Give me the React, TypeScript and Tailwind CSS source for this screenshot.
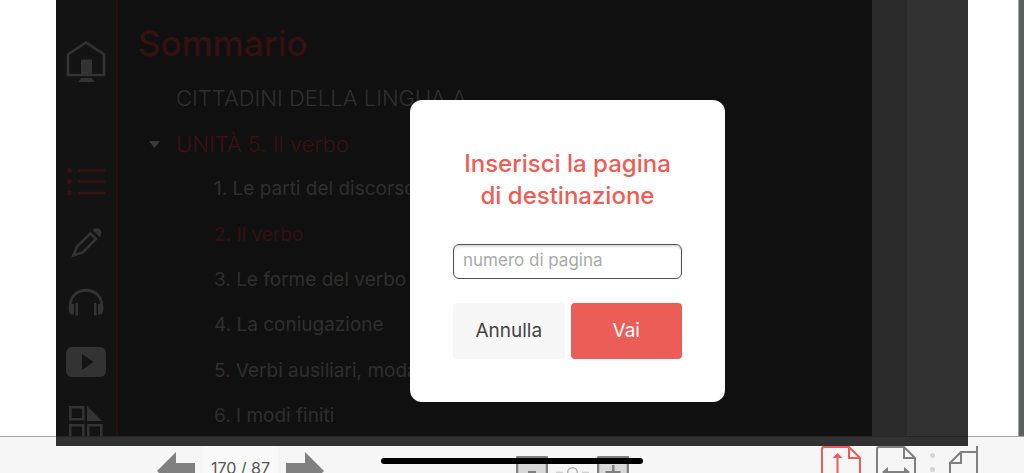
import { useState } from 'react'
import type { ReactNode } from 'react'

const chapters = [
  { title: '1. Le parti del discorso' },
  { title: '2. Il verbo', active: true },
  { title: '3. Le forme del verbo' },
  { title: '4. La coniugazione' },
  { title: '5. Verbi ausiliari, modali' },
  { title: '6. I modi finiti' },
]

function IconButton({ label, className, children }: { label: string; className: string; children: ReactNode }) {
  return (
    <button type="button" aria-label={label} className={`block shrink-0 ${className}`}>
      {children}
    </button>
  )
}

function Sidebar() {
  return (
    <nav className="flex w-[62px] shrink-0 flex-col items-center border-r-2 border-[#2a0f0f] bg-[#131313] pt-10 text-[#333333]">
      <IconButton label="Home" className="mb-[84px]">
        <svg width="40" height="43" viewBox="0 0 40 43" fill="none">
          <path d="M2 14.5 20 2.5l18 12V35H2Z" stroke="currentColor" strokeWidth="2.6" />
          <path d="M15 19.500h11v15H15zM15.500 38h10l3 4h-16Z" fill="currentColor" />
        </svg>
      </IconButton>
      <IconButton label="Sommario" className="mb-[30px] text-[#351313]">
        <svg width="40" height="30" viewBox="0 0 40 30" fill="currentColor">
          <circle cx="3.500" cy="3.500" r="2.600" />
          <circle cx="3.500" cy="14.500" r="2.600" />
          <circle cx="3.500" cy="26" r="2.600" />
          <path d="M12 2.200h27v2.600H12zM12 13.200h27v2.600H12zM12 24.700h27v2.600H12z" />
        </svg>
      </IconButton>
      <IconButton label="Note" className="mb-[30px]">
        <svg width="32" height="31" viewBox="0 0 32 31" fill="none">
          <path d="M20.500 6.500 7 19.500 3.500 28.200 12.500 25.500 26 12Z" stroke="currentColor" strokeWidth="2.600" />
          <path d="M22.500 3C25-.500 33 1 31 7.500L30 10.500Z" fill="currentColor" />
        </svg>
      </IconButton>
      <IconButton label="Audio" className="mb-[30px]">
        <svg width="36" height="29" viewBox="0 0 36 29" fill="none">
          <path d="M3 24C-4 -5 40 -5 33 24" stroke="currentColor" strokeWidth="2.800" />
          <path d="M1.500 16C-.5 21 1 26 3 26.500H6V16ZM34.500 16C36.500 21 35 26 33 26.500H30V16ZM7.500 15h2.500v12.500H7.500zM26 15h2.500v12.500H26z" fill="currentColor" />
        </svg>
      </IconButton>
      <IconButton label="Video" className="mb-7">
        <svg width="40" height="30" viewBox="0 0 40 30">
          <rect width="40" height="30" rx="6" fill="currentColor" />
          <path d="m16 7 11.500 8L16 23Z" fill="#131313" />
        </svg>
      </IconButton>
      <IconButton label="Risorse" className="">
        <svg width="34" height="36" viewBox="0 0 34 36" fill="none">
          <path d="M1.300 2.300h13v12h-13zM1.300 20.300h13v14h-13zM19.300 20.300h13v14h-13z" stroke="currentColor" strokeWidth="2.600" />
          <path d="M18 1v15h15Z" fill="currentColor" />
        </svg>
      </IconButton>
    </nav>
  )
}

function Summary() {
  return (
    <section className="min-w-0 flex-1 overflow-hidden bg-[#101010] pl-5 text-[#2f2f2f]">
      <h1 className="pt-[22px] text-[35px] leading-[42px] font-medium text-[#351111]">Sommario</h1>
      <ul className="mt-3 grid h-[363px] grid-rows-8 whitespace-nowrap">
        <li className="flex items-center pl-[38px] text-[22px] font-light">CITTADINI DELLA LINGUA A</li>
        <li className="flex items-center gap-4 pl-[11px] text-[22px] font-light text-[#3b1212]">
          <svg width="11" height="7" viewBox="0 0 11 7" className="text-[#3a3a3a]" fill="currentColor">
            <path d="M0 0h11L5.500 7Z" />
          </svg>
          UNITÀ 5. Il verbo
        </li>
        {chapters.map((chapter) => (
          <li key={chapter.title} className="flex items-center pl-[76px] text-[19px]">
            <a href="#" className={chapter.active ? 'text-[#351111]' : ''}>
              {chapter.title}
            </a>
          </li>
        ))}
      </ul>
    </section>
  )
}

function GoToPageDialog() {
  const [page, setPage] = useState('')

  return (
    <div className="absolute inset-x-0 top-[100px] flex justify-center pl-[111px]">
      <form
        role="dialog"
        aria-labelledby="goto-title"
        className="w-[315px] rounded-xl bg-white px-[43px] pt-12 pb-[43px]"
        onSubmit={(e) => e.preventDefault()}
      >
        <h2 id="goto-title" className="text-center text-[24px] leading-8 font-medium whitespace-nowrap text-[#ec5d57]">
          Inserisci la pagina
          <br />
          di destinazione
        </h2>
        <input
          type="text"
          aria-label="numero di pagina"
          placeholder="numero di pagina"
          value={page}
          onChange={(e) => setPage(e.target.value)}
          className="mt-8 block h-[35px] w-full rounded-md border border-[#505050] px-[9px] pb-1 text-[17px] shadow-[inset_0_2px_2px_#dddddd] placeholder:text-[#aaaaaa]"
        />
        <div className="mt-6 grid grid-cols-2 gap-[6px] text-[19px]">
          <button type="button" className="h-14 rounded-sm bg-[#f7f7f7] text-[#444444]">
            Annulla
          </button>
          <button type="submit" className="h-14 rounded-sm bg-[#ec5d57] text-white">
            Vai
          </button>
        </div>
      </form>
    </div>
  )
}

function Toolbar() {
  return (
    <footer className="h-[37px] shrink-0 overflow-hidden bg-[#f6f6f6] text-[#808080]">
      <div className="flex h-[10px]">
        <div className="w-14 border-t border-[#a5a5a5]" />
        <div className="flex-1 border-t border-[#262626] bg-[#313131]" />
        <div className="w-14 border-t border-[#a5a5a5]" />
      </div>
      <div className="flex items-start justify-between pr-[46px] pl-[157px]">
        <div className="flex items-start">
          <IconButton label="Pagina precedente" className="pt-[6px]">
            <svg width="38" height="38" viewBox="0 0 38 38" fill="currentColor">
              <path d="M19 0v11h19v16H19v11L0 19Z" />
            </svg>
          </IconButton>
          <button type="button" className="mx-2 flex h-10 w-[75px] justify-center bg-[#f9f9f9] pt-3 text-[16px] leading-5 whitespace-nowrap text-[#555555]">
            170 / 87
          </button>
          <IconButton label="Pagina successiva" className="pt-[6px]">
            <svg width="38" height="38" viewBox="0 0 38 38" fill="currentColor">
              <path d="M19 0v11H0v16h19v11l19-19Z" />
            </svg>
          </IconButton>
        </div>
        <div className="flex items-start pt-[10px]">
          <IconButton label="Riduci" className="">
            <svg width="32" height="32" viewBox="0 0 32 32">
              <rect x="1" y="1" width="30" height="30" rx="1" fill="#d8d8d8" stroke="currentColor" strokeWidth="2.500" />
              <path d="M12 15h8v3h-8z" fill="currentColor" />
            </svg>
          </IconButton>
          <svg width="49" height="32" viewBox="0 0 49 32" fill="none" strokeWidth="1.500">
            <path d="M8 16.500h7M34 16.500h7" stroke="#d0d0d0" />
            <circle cx="24.500" cy="16.500" r="4.800" stroke="#b0b0b0" />
          </svg>
          <IconButton label="Ingrandisci" className="">
            <svg width="32" height="32" viewBox="0 0 32 32">
              <rect x="1" y="1" width="30" height="30" rx="1" fill="#d8d8d8" stroke="currentColor" strokeWidth="2.500" />
              <path d="M8.500 15h15v3h-15zM15 9h2.500v15H15z" fill="currentColor" />
            </svg>
          </IconButton>
        </div>
        <div className="flex items-start">
          <IconButton label="Adatta in altezza" className="text-[#ec5d57]">
            <svg width="40" height="48" viewBox="0 0 40 48" fill="none" stroke="currentColor" strokeWidth="2">
              <path d="M3 1h25l11 11v33q0 2-2 2H3q-2 0-2-2V3q0-2 2-2ZM28 1v11h11M16.500 10v28" />
              <path d="m16.500 7 5 5h-10ZM16.500 41l5-5h-10Z" fill="currentColor" stroke="none" />
            </svg>
          </IconButton>
          <IconButton label="Adatta in larghezza" className="ml-[15px]">
            <svg width="40" height="48" viewBox="0 0 40 48" fill="none" stroke="currentColor" strokeWidth="2">
              <path d="M3 1h25l11 11v33q0 2-2 2H3q-2 0-2-2V3q0-2 2-2ZM28 1v11h11M9 26h22" />
              <path d="m6 26 6-5v10ZM34 26l-6-5v10Z" fill="currentColor" stroke="none" />
            </svg>
          </IconButton>
          <svg width="5" height="48" viewBox="0 0 5 48" className="mx-[14px]" fill="#d5d5d5">
            <circle cx="2.500" cy="9.500" r="2.500" />
            <circle cx="2.500" cy="23.500" r="2.500" />
            <circle cx="2.500" cy="37.500" r="2.500" />
          </svg>
          <IconButton label="Pagina doppia" className="">
            <svg width="29" height="48" viewBox="0 0 29 48" fill="none" stroke="currentColor" strokeWidth="2">
              <path d="M28 0v48M28 6H12L1 17v30h27M12 6v11H1" />
            </svg>
          </IconButton>
        </div>
      </div>
    </footer>
  )
}

export default function App() {
  return (
    <div className="relative flex h-screen flex-col overflow-hidden bg-white font-['Inter','Liberation_Sans',sans-serif]">
      <main className="flex min-h-0 flex-1 overflow-hidden pl-14">
        <Sidebar />
        <Summary />
        <div className="w-[35px] shrink-0 bg-[#2a2a2a]" />
        <div className="w-[61px] shrink-0 bg-[#323232]" />
        <div className="ml-[50px] w-[6px] shrink-0 border-l border-[#a8a8a8] bg-[#5d5e5e]" />
      </main>
      <Toolbar />
      <GoToPageDialog />
      {/* home indicator */}
      <div className="absolute inset-x-0 bottom-[9px] flex justify-center">
        <div className="h-[6px] w-[262px] rounded-full bg-black" />
      </div>
    </div>
  )
}
